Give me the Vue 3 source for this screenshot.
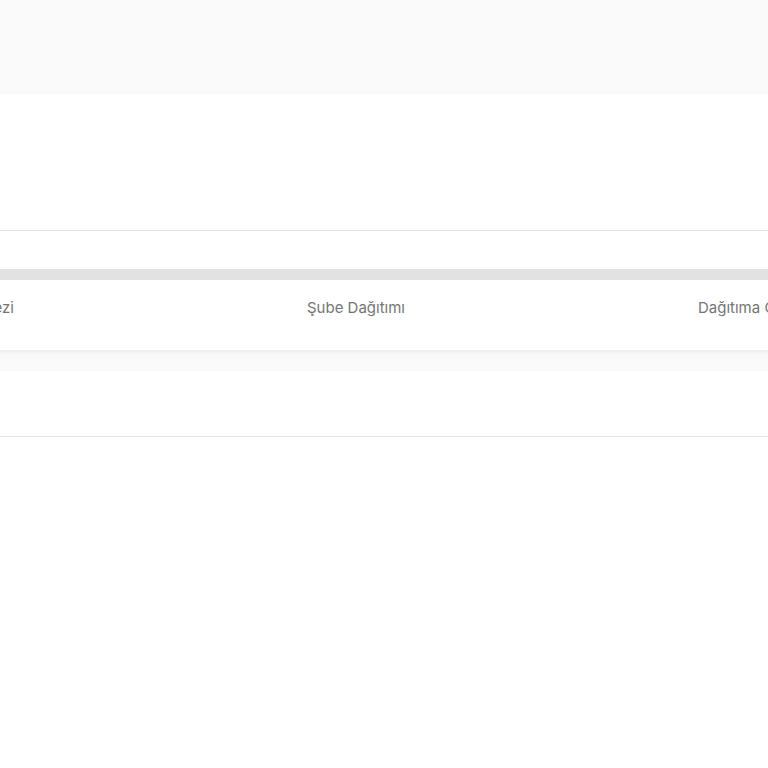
<template>
  <main class="tracking">
    <section class="card summary">
      <header class="summary-head"></header>
      <div class="progress" role="progressbar" aria-label="Kargo" aria-valuemin="0" aria-valuemax="100" aria-valuenow="0">
        <div class="progress-bar" :style="{ width: progress + '%' }"></div>
      </div>
      <ol class="steps">
        <li v-for="step in steps" :key="step.label" class="step" :class="step.side">
          <span>{{ step.label }}</span>
        </li>
      </ol>
    </section>
    <section class="card details">
      <header class="details-head"></header>
    </section>
  </main>
</template>

<script setup>
import { ref } from 'vue';

const progress = ref(0);

const steps = ref([
  { label: 'Merkezi', side: 'before' },
  { label: 'Şube Dağıtımı', side: 'current' },
  { label: 'Dağıtıma Ç', side: 'after' }
]);
</script>

<style>
body {
  background-color: #fafafa;
}
</style>

<style scoped>
.tracking {
  display: flex;
  flex-direction: column;
  gap: 21px;
  min-height: 100vh;
  padding-top: 94px;
  box-sizing: border-box;
  overflow: hidden;
  font-family: Inter, "Liberation Sans", sans-serif;
}

.card {
  margin: 0 -20px;
  background-color: #fff;
  box-shadow: 0 1px 3px rgba(0, 0, 0, 0.06), 0 3px 8px rgba(0, 0, 0, 0.03);
}

.summary {
  padding-bottom: 30px;
}

.summary-head {
  height: 136px;
  border-bottom: 1px solid #e2e2e2;
}

.progress {
  height: 11px;
  margin-top: 38px;
  background-color: #e2e2e2;
}

.progress-bar {
  height: 100%;
  background-color: #4caf50;
}

.steps {
  display: flex;
  justify-content: space-between;
  margin: 15px 0 0;
  padding: 0 20px;
  list-style: none;
  font-size: 15px;
  line-height: 25px;
  color: #757575;
}

.step {
  display: flex;
  white-space: nowrap;
}

.before {
  width: 14px;
  justify-content: flex-end;
}

.after {
  width: 70px;
}

.details {
  flex: 1;
}

.details-head {
  height: 65px;
  border-bottom: 1px solid #e2e2e2;
}
</style>
